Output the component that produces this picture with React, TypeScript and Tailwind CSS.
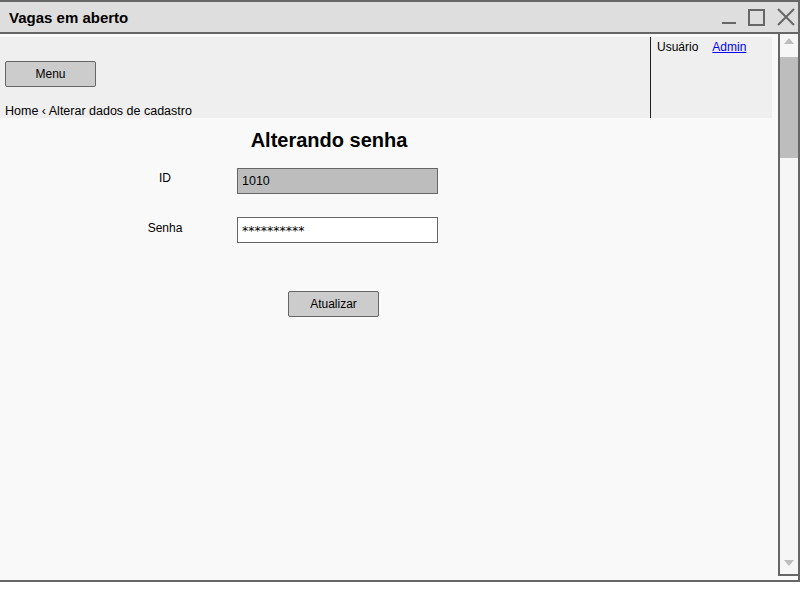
import { useState } from "react";

function WindowControls() {
    return (
        <div className="flex items-center gap-[12px] pr-[3px]">
            <svg width="14" height="16" viewBox="0 0 14 16">
                <line x1="0" y1="14" x2="14" y2="14" stroke="#666" strokeWidth="2" />
            </svg>
            <svg width="17" height="17" viewBox="0 0 17 17">
                <rect x="1" y="1" width="15" height="15" fill="none" stroke="#666" strokeWidth="2" />
            </svg>
            <svg width="18" height="18" viewBox="0 0 18 18">
                <path d="M1 1 L17 17 M17 1 L1 17" stroke="#666" strokeWidth="2" />
            </svg>
        </div>
    );
}

function Scrollbar() {
    return (
        <div className="w-[20px] h-[542px] border-l-2 border-b-2 border-[#666] bg-[#f6f6f6] flex flex-col">
            <div className="h-[23px] flex justify-center pt-[4px]">
                <svg width="10" height="6" viewBox="0 0 10 6">
                    <polygon points="0,6 5,0 10,6" fill="#bdbdbd" />
                </svg>
            </div>
            <div className="h-[101px] bg-[#bdbdbd]" />
            <div className="flex-1" />
            <div className="h-[14px] flex justify-center">
                <svg width="10" height="6" viewBox="0 0 10 6">
                    <polygon points="0,0 10,0 5,6" fill="#bdbdbd" />
                </svg>
            </div>
        </div>
    );
}

export default function App() {
    const [senha, setSenha] = useState("**********");

    return (
        <div className="w-[800px] h-[600px] bg-white overflow-hidden font-['Liberation_Sans',Arial,sans-serif] text-black">
            <div className="h-[582px] border-t-2 border-r-2 border-b-2 border-[#666] bg-[#f9f9f9] flex flex-col">
                {/* title bar */}
                <div className="h-[32px] shrink-0 bg-[#dedede] border-b-2 border-[#666] flex items-center justify-between">
                    <h1 className="pl-[9px] text-[15px] font-bold leading-none">Vagas em aberto</h1>
                    <WindowControls />
                </div>

                <div className="flex-1 flex min-h-0">
                    <main className="flex-1 flex flex-col">
                        <header className="mt-[3px] mr-[6px] h-[81px] shrink-0 bg-[#efefef] flex overflow-hidden">
                            <div className="flex-1 flex flex-col items-start pl-[5px]">
                                <button className="mt-[24px] shrink-0 w-[91px] h-[26px] bg-[#cccccc] border border-[#666] rounded-[2px] text-[12px]">
                                    Menu
                                </button>
                                <nav className="mt-[18px] shrink-0 text-[12.5px] leading-[13px] whitespace-nowrap">
                                    Home ‹ Alterar dados de cadastro
                                </nav>
                            </div>
                            <div className="w-[122px] border-l-[1.5px] border-[#222] pl-[6px] pt-[2px] text-[12px] leading-[16px] flex gap-[14px]">
                                <span>Usuário</span>
                                <a href="#" className="text-[#0000ff] underline">Admin</a>
                            </div>
                        </header>

                        <section className="ml-[120px] w-[418px] flex flex-col">
                            <h2 className="mt-[10px] text-center text-[20px] font-bold leading-[24px]">Alterando senha</h2>

                            <div className="mt-[16px] flex items-start">
                                <label className="w-[90px] pt-[2px] text-center text-[12px] leading-[16px]">ID</label>
                                <input
                                    readOnly
                                    value="1010"
                                    className="ml-[27px] w-[201px] h-[26px] bg-[#bdbdbd] border border-[#666] px-[4px] text-[12.5px] outline-none"
                                />
                            </div>

                            <div className="mt-[23px] flex items-start">
                                <label className="w-[90px] pt-[3px] text-center text-[12px] leading-[16px]">Senha</label>
                                <input
                                    value={senha}
                                    onChange={(e) => setSenha(e.target.value)}
                                    className="ml-[27px] w-[201px] h-[26px] bg-white border border-[#666] px-[4px] font-['DejaVu_Sans',sans-serif] text-[12.5px] outline-none"
                                />
                            </div>

                            <button className="mt-[48px] ml-[168px] w-[91px] h-[26px] bg-[#cccccc] border border-[#666] rounded-[2px] text-[12px]">
                                Atualizar
                            </button>
                        </section>
                    </main>
                    <Scrollbar />
                </div>
            </div>
        </div>
    );
}
